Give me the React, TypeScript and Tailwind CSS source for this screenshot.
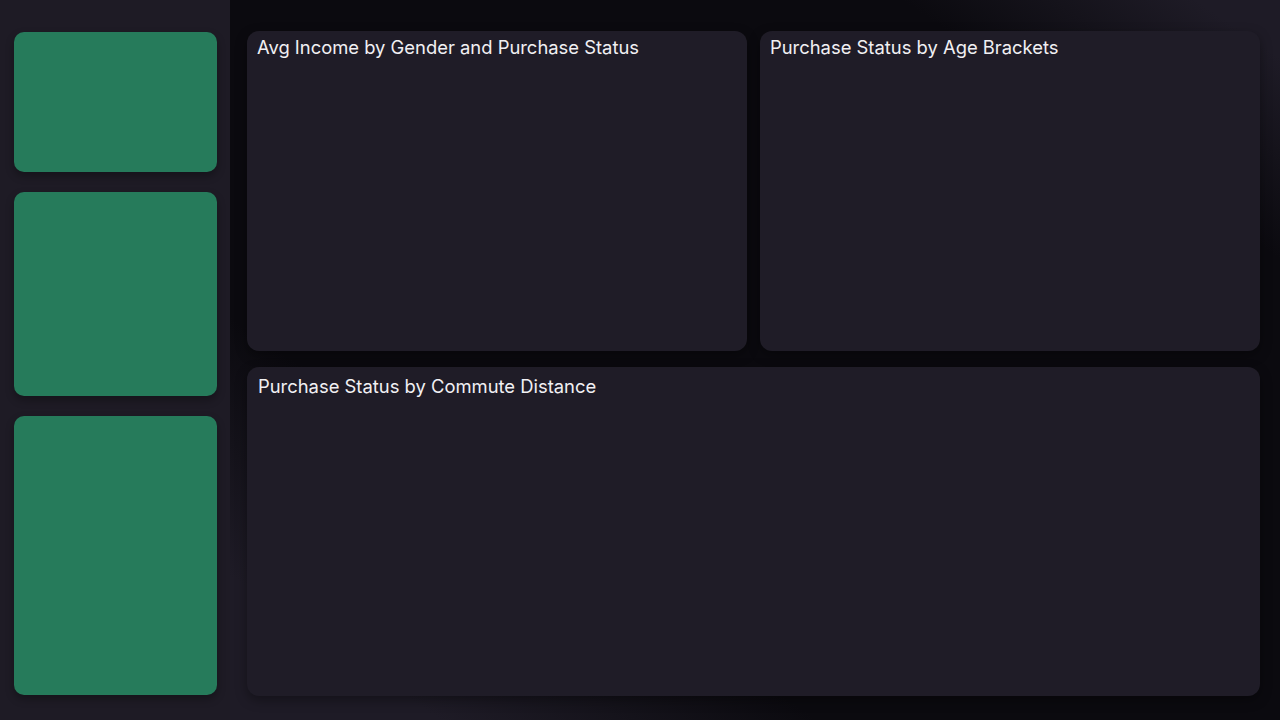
import React from "react";

function Panel({ title, className }: { title: string; className?: string }) {
  return (
    <div className={"rounded-[12px] bg-[#1f1c27] shadow-[0_4px_12px_rgba(0,0,0,0.35)] px-[10px] " + (className ?? "")}>
      <div className="text-[18.4px] leading-[28px] text-[#f1f0f3]">{title}</div>
    </div>
  );
}

export default function App() {
  return (
    <div
      className="flex h-[720px] w-[1280px] overflow-hidden"
      style={{ fontFamily: "Inter, 'Noto Sans', sans-serif" }}
    >
      <aside className="flex w-[230px] shrink-0 flex-col gap-[20px] bg-[#1e1b25] pl-[14px] pr-[13px] pt-[32px] pb-[25px]">
        <div className="h-[140px] rounded-[10px] bg-[#267b5b] shadow-[0_4px_8px_rgba(0,0,0,0.3)]" />
        <div className="h-[204px] rounded-[10px] bg-[#267b5b] shadow-[0_4px_8px_rgba(0,0,0,0.3)]" />
        <div className="flex-1 rounded-[10px] bg-[#267b5b] shadow-[0_4px_8px_rgba(0,0,0,0.3)]" />
      </aside>
      <main className="flex flex-1 flex-col gap-[16px] bg-[linear-gradient(to_bottom_left,#1e1b26_4%,#0b0a0f_18%,#0b0a0f_72%,#1e1b26_90%)] pl-[17px] pr-[20px] pt-[31px] pb-[24px]">
        <div className="flex h-[320px] gap-[13px]">
          <Panel title="Avg Income by Gender and Purchase Status" className="flex-1 pt-[2px]" />
          <Panel title="Purchase Status by Age Brackets" className="flex-1 pt-[2px]" />
        </div>
        <Panel title="Purchase Status by Commute Distance" className="flex-1 pl-[11px] pt-[5px]" />
      </main>
    </div>
  );
}
